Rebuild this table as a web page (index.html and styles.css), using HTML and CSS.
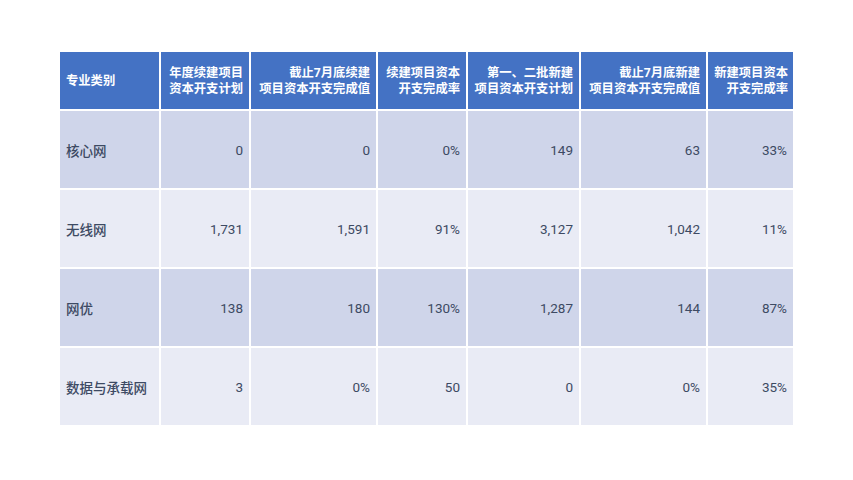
FILE: index.html
```html
<!DOCTYPE html>
<html lang="zh">
<head>
<meta charset="utf-8">
<link rel="stylesheet" href="styles.css">
</head>
<body>
<table class="data">
  <colgroup>
    <col class="c1"><col class="c2"><col class="c3"><col class="c4"><col class="c5"><col class="c6"><col class="c7">
  </colgroup>
  <thead>
    <tr>
      <th class="left">专业类别</th>
      <th>年度续建项目<br>资本开支计划</th>
      <th>截止7月底续建<br>项目资本开支完成值</th>
      <th>续建项目资本<br>开支完成率</th>
      <th>第一、二批新建<br>项目资本开支计划</th>
      <th>截止7月底新建<br>项目资本开支完成值</th>
      <th>新建项目资本<br>开支完成率</th>
    </tr>
  </thead>
  <tbody>
    <tr class="odd">
      <td class="left">核心网</td><td>0</td><td>0</td><td>0%</td><td>149</td><td>63</td><td>33%</td>
    </tr>
    <tr class="even">
      <td class="left">无线网</td><td>1,731</td><td>1,591</td><td>91%</td><td>3,127</td><td>1,042</td><td>11%</td>
    </tr>
    <tr class="odd">
      <td class="left">网优</td><td>138</td><td>180</td><td>130%</td><td>1,287</td><td>144</td><td>87%</td>
    </tr>
    <tr class="even">
      <td class="left">数据与承载网</td><td>3</td><td>0%</td><td>50</td><td>0</td><td>0%</td><td>35%</td>
    </tr>
  </tbody>
</table>
</body>
</html>
```
FILE: styles.css
```css
html, body {
  margin: 0;
  background: #ffffff;
}
body {
  padding: 52px 0 0 60px;
  font-family: Roboto, "Noto Sans CJK SC", sans-serif;
}
.data {
  border-collapse: collapse;
  table-layout: fixed;
  width: 733px;
}
.c1 { width: 100px; }
.c2 { width: 90px; }
.c3 { width: 127px; }
.c4 { width: 90px; }
.c5 { width: 113px; }
.c6 { width: 127px; }
.c7 { width: 86px; }
.data th, .data td {
  border: 2px solid #ffffff;
  padding: 0 6px;
  text-align: right;
  vertical-align: middle;
}
.data tr > :first-child { border-left: none; }
.data tr > :last-child { border-right: none; }
.data thead tr > * { border-top: none; }
.data tbody tr:last-child > * { border-bottom: none; }
.data th {
  background: #4472c4;
  color: #ffffff;
  font-weight: 700;
  font-size: 12.3px;
  line-height: 16px;
  height: 57px;
  white-space: nowrap;
}
.data tr > th:last-child { padding-right: 5px; }
.data td {
  color: #3d4a63;
  font-size: 13.5px;
  height: 77px;
}
.data td.left {
  font-weight: 500;
}
.data .left {
  text-align: left;
}
.odd td { background: #cfd5ea; }
.even td { background: #e9ebf5; }
```
